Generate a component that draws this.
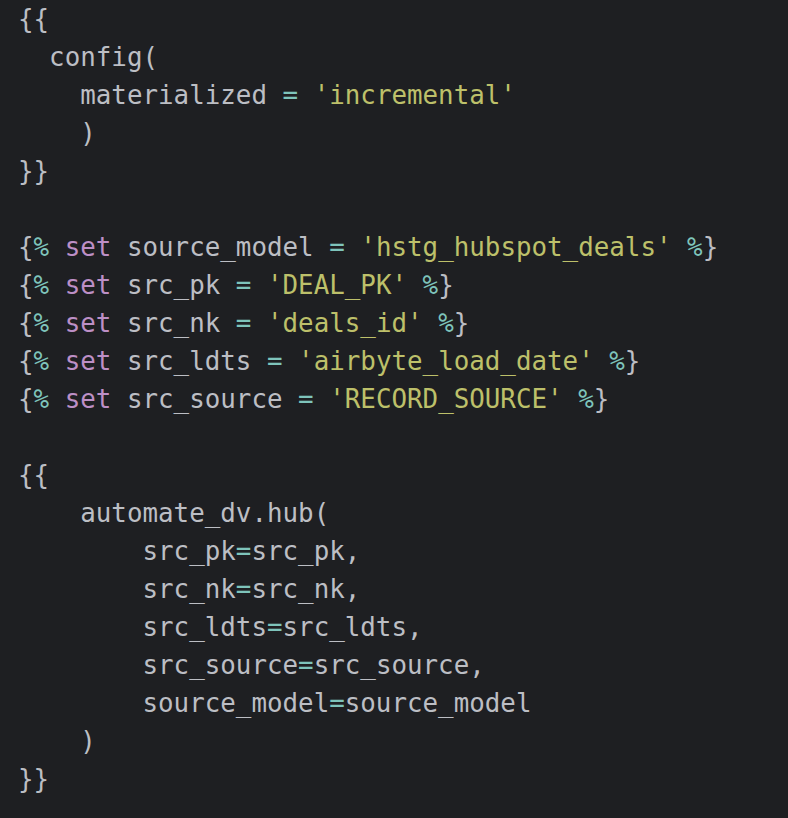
import React from "react";

type Seg = [string, string];

const T = "text-[#bcbec4]";
const K = "text-[#bd8fc6]";
const S = "text-[#bdc06a]";
const O = "text-[#7ec4bb]";

const lines: Seg[][] = [
  [["{{", T]],
  [["  config(", T]],
  [["    materialized ", T], ["=", O], [" ", T], ["'incremental'", S]],
  [["    )", T]],
  [["}}", T]],
  [],
  [["{", T], ["%", O], [" ", T], ["set", K], [" source_model ", T], ["=", O], [" ", T], ["'hstg_hubspot_deals'", S], [" ", T], ["%", O], ["}", T]],
  [["{", T], ["%", O], [" ", T], ["set", K], [" src_pk ", T], ["=", O], [" ", T], ["'DEAL_PK'", S], [" ", T], ["%", O], ["}", T]],
  [["{", T], ["%", O], [" ", T], ["set", K], [" src_nk ", T], ["=", O], [" ", T], ["'deals_id'", S], [" ", T], ["%", O], ["}", T]],
  [["{", T], ["%", O], [" ", T], ["set", K], [" src_ldts ", T], ["=", O], [" ", T], ["'airbyte_load_date'", S], [" ", T], ["%", O], ["}", T]],
  [["{", T], ["%", O], [" ", T], ["set", K], [" src_source ", T], ["=", O], [" ", T], ["'RECORD_SOURCE'", S], [" ", T], ["%", O], ["}", T]],
  [],
  [["{{", T]],
  [["    automate_dv.hub(", T]],
  [["        src_pk", T], ["=", O], ["src_pk,", T]],
  [["        src_nk", T], ["=", O], ["src_nk,", T]],
  [["        src_ldts", T], ["=", O], ["src_ldts,", T]],
  [["        src_source", T], ["=", O], ["src_source,", T]],
  [["        source_model", T], ["=", O], ["source_model", T]],
  [["    )", T]],
  [["}}", T]],
];

export default function App() {
  return (
    <div className="w-[788px] h-[818px] bg-[#1e1f22] overflow-hidden pl-[18px] font-['DejaVu_Sans_Mono',monospace] text-[25.85px] leading-[38px] whitespace-pre">
      {lines.map((l, i) => (
        <div key={i} className="h-[38px]">
          {l.map(([t, c], j) => (
            <span key={j} className={c}>
              {t}
            </span>
          ))}
        </div>
      ))}
    </div>
  );
}
